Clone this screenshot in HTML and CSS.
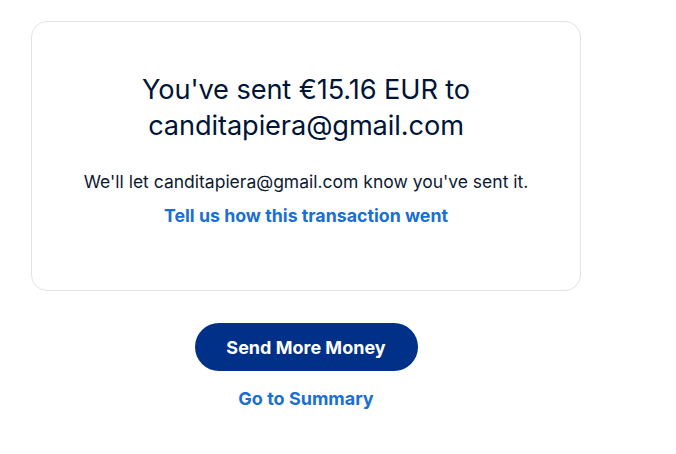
FILE: index.html
```html
<!DOCTYPE html>
<html>
<head>
<meta charset="utf-8">
<link rel="stylesheet" href="styles.css">
</head>
<body>
<main class="page">
  <section class="card">
    <h1 class="title">You've sent €15.16 EUR to<br>canditapiera@gmail.com</h1>
    <p class="note">We'll let canditapiera@gmail.com know you've sent it.</p>
    <a class="link" href="#">Tell us how this transaction went</a>
  </section>
  <div class="actions">
    <button class="btn">Send More Money</button>
    <a class="link summary" href="#">Go to Summary</a>
  </div>
</main>
</body>
</html>
```
FILE: styles.css
```css
html, body { margin: 0; padding: 0; background: #fff; }
body { font-family: Inter, "Liberation Sans", sans-serif; color: #001435; }
.page { width: 550px; padding: 21px 0 0 31px; }
.card {
  box-sizing: border-box;
  height: 270px;
  border: 1px solid #e3e3e3;
  border-radius: 16px;
  display: flex;
  flex-direction: column;
  align-items: center;
  padding-top: 50px;
  text-align: center;
}
.title {
  margin: 0;
  font-size: 27.2px;
  font-weight: 400;
  line-height: 36px;
  letter-spacing: -0.1px;
}
.note {
  margin: 26px 0 0;
  font-size: 17.5px;
  line-height: 24px;
  color: #0c1a33;
}
.link {
  color: #1a6fd2;
  font-weight: 700;
  font-size: 17.8px;
  text-decoration: none;
  line-height: 24px;
}
.card .link { margin-top: 10px; }
.actions {
  display: flex;
  flex-direction: column;
  align-items: center;
  margin-top: 32px;
}
.btn {
  width: 223px;
  height: 48px;
  border: none;
  border-radius: 24px;
  background: #003087;
  color: #fff;
  font-family: Inter, "Liberation Sans", sans-serif;
  font-weight: 700;
  font-size: 18px;
}
.summary { margin-top: 16px; font-size: 18px; }
```
